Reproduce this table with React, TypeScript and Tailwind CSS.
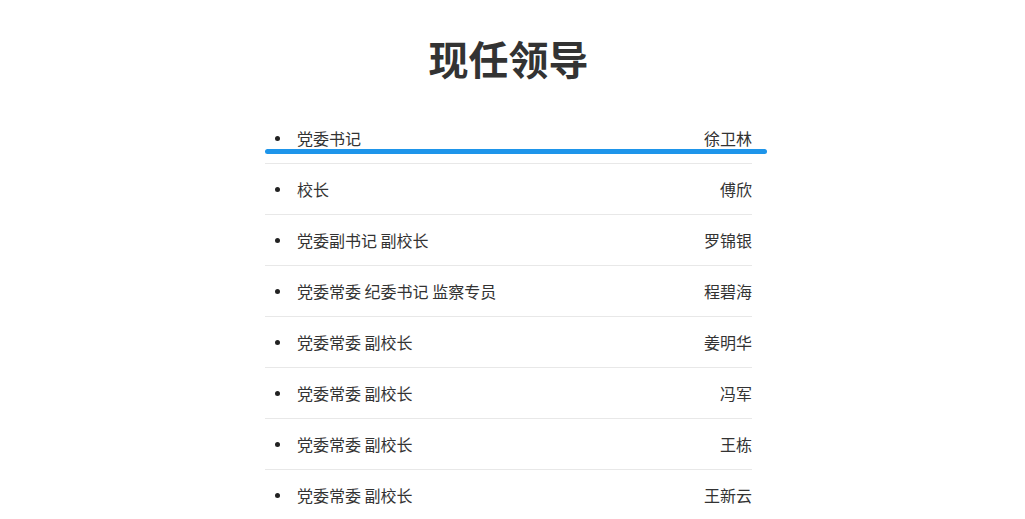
const leaders = [
  { title: "党委书记", name: "徐卫林" },
  { title: "校长", name: "傅欣" },
  { title: "党委副书记 副校长", name: "罗锦银" },
  { title: "党委常委 纪委书记 监察专员", name: "程碧海" },
  { title: "党委常委 副校长", name: "姜明华" },
  { title: "党委常委 副校长", name: "冯军" },
  { title: "党委常委 副校长", name: "王栋" },
  { title: "党委常委 副校长", name: "王新云" },
];

export default function App() {
  return (
    <div
      className="min-h-screen bg-white text-[#333]"
      style={{ fontFamily: '"Noto Sans CJK SC", "Noto Sans", sans-serif' }}
    >
      <h1 className="pt-[30px] pb-[27px] text-center text-[40px] leading-[56px] font-bold text-[#333] pr-[8px]">
        现任领导
      </h1>
      <ul className="ml-[265px] w-[487px]">
        {leaders.map((l, i) => (
          <li
            key={i}
            className="relative flex h-[51px] items-center justify-between border-b border-[#e8e8e8] text-[16px]"
          >
            <div className="flex items-center">
              <span className="ml-[10px] mr-[17px] h-[5px] w-[5px] rounded-full bg-[#222]" />
              <span>{l.title}</span>
            </div>
            <span>{l.name}</span>
            {i === 0 && (
              <div className="absolute left-0 top-[36px] h-[5px] w-[502px] rounded-full bg-[#1e95ea]" />
            )}
          </li>
        ))}
      </ul>
    </div>
  );
}
